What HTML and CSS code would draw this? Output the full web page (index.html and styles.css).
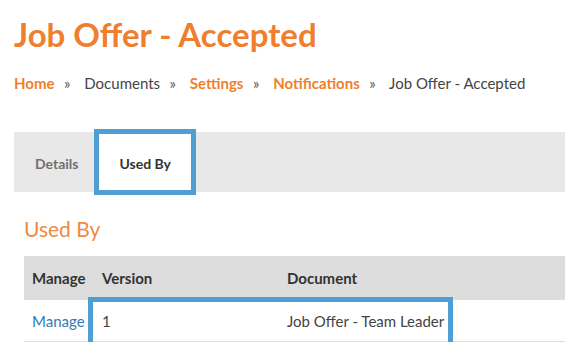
FILE: index.html
```html
<!DOCTYPE html>
<html>
<head>
<meta charset="utf-8">
<link rel="stylesheet" href="styles.css">
</head>
<body>
<div class="page">
  <h1 class="title">Job Offer - Accepted</h1>
  <nav class="crumbs">
    <a class="crumb-link">Home</a><span class="sep">»</span>
    <span class="crumb">Documents</span><span class="sep">»</span>
    <a class="crumb-link">Settings</a><span class="sep">»</span>
    <a class="crumb-link">Notifications</a><span class="sep">»</span>
    <span class="crumb">Job Offer - Accepted</span>
  </nav>
  <div class="tabs">
    <div class="tab">Details</div>
    <div class="tab tab-active">Used By</div>
  </div>
  <section class="panel">
    <h2 class="panel-title">Used By</h2>
    <div class="table-wrap">
      <table class="grid">
        <thead>
          <tr><th class="c-manage">Manage</th><th class="c-version">Version</th><th>Document</th></tr>
        </thead>
        <tbody>
          <tr><td><a class="link">Manage</a></td><td>1</td><td>Job Offer - Team Leader</td></tr>
        </tbody>
      </table>
      <div class="highlight"></div>
    </div>
  </section>
</div>
</body>
</html>
```

FILE: styles.css
```css
html, body { margin: 0; padding: 0; background: #fff; }
body {
  font-family: Lato, "Open Sans", sans-serif;
  color: #444;
  width: 640px;
  overflow: hidden;
}
.page { padding: 0 0 0 14px; }
.title {
  margin: 0;
  padding-top: 14px;
  font-size: 33px;
  line-height: 40px;
  font-weight: 700;
  color: #ef7f2f;
}
.crumbs {
  margin-top: 19px;
  font-size: 15px;
  line-height: 20px;
  color: #444;
}
.crumb-link { color: #ef7f2f; font-weight: 700; }
.sep { margin: 0 10px 0 9.5px; color: #555; }
.tabs {
  margin-top: 39px;
  display: flex;
  height: 60px;
  background: #e8e8e8;
}
.tab {
  display: flex;
  align-items: center;
  padding: 2px 16px 0 21px;
  font-size: 14px;
  font-weight: 700;
  color: #707070;
}
.tab-active {
  margin: -3px 0;
  padding: 2px 20px 0;
  border: 5px solid #4f9fd4;
  background: #fff;
  color: #333;
}
.panel { padding: 0 0 0 10px; }
.panel-title {
  margin: 24px 0 0;
  font-size: 21px;
  line-height: 26px;
  font-weight: 400;
  color: #f08a3e;
}
.table-wrap { position: relative; margin-top: 14px; }
.grid {
  width: 100%;
  border-collapse: collapse;
  font-size: 15px;
}
.grid th {
  background: #dddddd;
  text-align: left;
  font-weight: 700;
  color: #333;
  height: 44px;
  padding: 0 8px;
}
.grid td {
  height: 41px;
  padding: 0 8px;
  border-bottom: 1px solid #ddd;
  color: #444;
}
.c-manage { width: 54px; }
.c-version { width: 169px; }
.link { color: #337ab7; }
.highlight {
  position: absolute;
  left: 64px;
  top: 41px;
  width: 355px;
  height: 40px;
  border: 5px solid #4f9fd4;
}
```
